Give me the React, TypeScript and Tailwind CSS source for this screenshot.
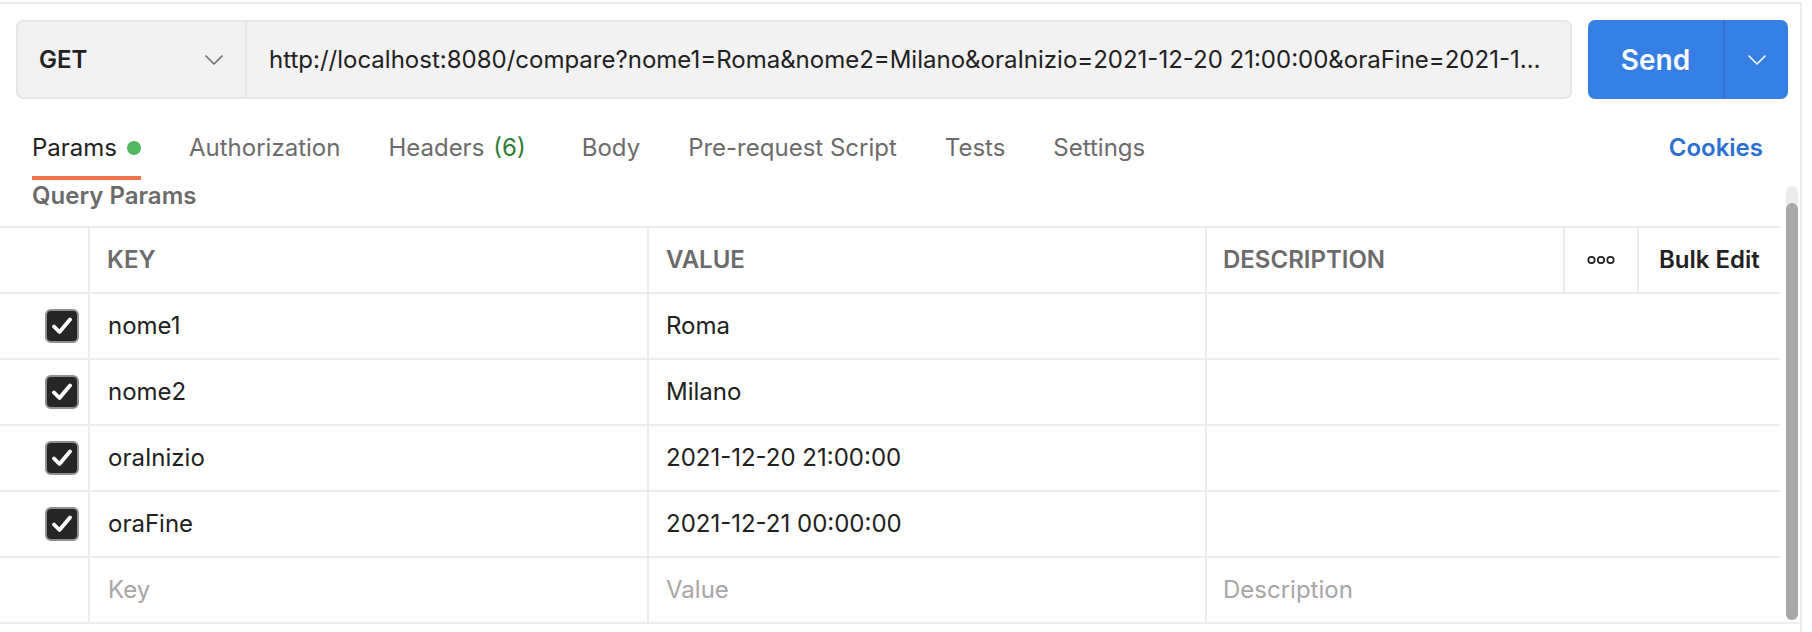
import React from 'react';

const tabs = [
  { label: 'Authorization' },
  { label: 'Headers', count: '(6)' },
  { label: 'Body' },
  { label: 'Pre-request Script' },
  { label: 'Tests' },
  { label: 'Settings' },
];

const params = [
  { key: 'nome1', value: 'Roma' },
  { key: 'nome2', value: 'Milano' },
  { key: 'oraInizio', value: '2021-12-20 21:00:00' },
  { key: 'oraFine', value: '2021-12-21 00:00:00' },
];

const Chevron = ({ className }: { className?: string }) => (
  <svg width="18" height="10" viewBox="0 0 18 10" fill="none" className={className}>
    <path d="M1 1l8 8 8-8" stroke="currentColor" strokeWidth="1.6" strokeLinecap="round" strokeLinejoin="round" />
  </svg>
);

const Checkbox = () => (
  <div className="w-[34px] h-[34px] rounded-[6px] bg-[#262626] border-2 border-[#8f8f8f] flex items-center justify-center">
    <svg width="22" height="18" viewBox="0 0 22 18" fill="none">
      <path d="M3 9.5l5.5 5.5L19 2.5" stroke="white" strokeWidth="3.8" strokeLinecap="round" strokeLinejoin="round" />
    </svg>
  </div>
);

const MoreDots = () => (
  <svg width="28" height="10" viewBox="0 0 28 10" fill="none">
    <circle cx="4.5" cy="5" r="3.2" stroke="#212121" strokeWidth="1.7" />
    <circle cx="14" cy="5" r="3.2" stroke="#212121" strokeWidth="1.7" />
    <circle cx="23.5" cy="5" r="3.2" stroke="#212121" strokeWidth="1.7" />
  </svg>
);

export default function App() {
  return (
    <div className="w-[1812px] h-[632px] bg-white overflow-hidden font-['Inter',sans-serif] text-[#212121]">
      <div className="mt-[2px] w-[1802px] h-[630px] border-t-2 border-r-2 border-[#ededed]">
        {/* request bar */}
        <div className="flex pt-[16px] pl-[16px] gap-[16px]">
          <div className="flex h-[79px] w-[1556px] rounded-[7px] border-2 border-[#e6e6e6] bg-[#f2f2f2]">
            <div className="w-[229px] flex items-center justify-between pl-[21px] pr-[22px] border-r-2 border-[#e6e6e6]">
              <span className="text-[24px] font-semibold">GET</span>
              <Chevron className="text-[#6b6b6b]" />
            </div>
            <div className="flex-1 min-w-0 flex items-center pl-[22px] pr-[22px]">
              <span className="truncate text-[24px]">
                http://localhost:8080/compare?nome1=Roma&amp;nome2=Milano&amp;oraInizio=2021-12-20 21:00:00&amp;oraFine=2021-12-21 00:00:00
              </span>
            </div>
          </div>
          <div className="flex h-[79px] w-[200px] rounded-[7px] bg-[#357ee3] text-white">
            <div className="w-[135px] flex items-center justify-center text-[28px] font-semibold">Send</div>
            <div className="flex-1 flex items-center justify-center border-l-2 border-[#2f72d4]">
              <Chevron />
            </div>
          </div>
        </div>

        {/* tabs */}
        <div className="flex items-end justify-between pl-[32px] pr-[37px] h-[81px]">
          <div className="flex gap-[48px]">
            <div className="flex flex-col">
              <div className="flex items-center gap-[10px] h-[30px] text-[24px] leading-[30px]">
                <span>Params</span>
                <span className="w-[14px] h-[14px] rounded-full bg-[#4fb85f]" />
              </div>
              <div className="mt-[13px] h-[4px] bg-[#ef7449]" />
            </div>
            {tabs.map((t) => (
              <div key={t.label} className={`flex flex-col ${t.count ? 'mr-[8px]' : ''}`}>
                <div className="flex items-center gap-[9px] h-[30px] text-[24px] leading-[30px] text-[#6b6b6b]">
                  <span>{t.label}</span>
                  {t.count && <span className="text-[#2f7d36]">{t.count}</span>}
                </div>
                <div className="mt-[13px] h-[4px]" />
              </div>
            ))}
          </div>
          <div className="mb-[17px] h-[30px] leading-[30px] text-[24px] font-semibold text-[#2b6fd3]">Cookies</div>
        </div>

        {/* params */}
        <div className="flex border-b-2 border-[#ededed]">
          <div className="w-[1780px]">
            <div className="pl-[32px] pt-[1px] pb-[15px] h-[46px] text-[24px] leading-[30px] font-semibold text-[#6b6b6b]">
              Query Params
            </div>
            <div className="grid grid-cols-[88px_559px_558px_358px_74px_143px] h-[66px] border-t-2 border-[#ededed] text-[24px] font-semibold">
              <div />
              <div className="flex items-center pl-[17px] border-l-2 border-[#ededed] text-[#6b6b6b]">KEY</div>
              <div className="flex items-center pl-[17px] border-l-2 border-[#ededed] text-[#6b6b6b]">VALUE</div>
              <div className="flex items-center pl-[16px] border-l-2 border-[#ededed] text-[#6b6b6b]">DESCRIPTION</div>
              <div className="flex items-center justify-center border-l-2 border-[#ededed]">
                <MoreDots />
              </div>
              <div className="flex items-center pl-[20px] border-l-2 border-[#ededed]">Bulk Edit</div>
            </div>
            {params.map((p) => (
              <div key={p.key} className="grid grid-cols-[88px_559px_558px_575px] h-[66px] border-t-2 border-[#ededed] text-[24px]">
                <div className="flex items-center justify-end pr-[9px]">
                  <Checkbox />
                </div>
                <div className="flex items-center pl-[18px] border-l-2 border-[#ededed]">{p.key}</div>
                <div className="flex items-center pl-[17px] border-l-2 border-[#ededed]">{p.value}</div>
                <div className="border-l-2 border-[#ededed]" />
              </div>
            ))}
            <div className="grid grid-cols-[88px_559px_558px_575px] h-[66px] border-t-2 border-[#ededed] text-[24px] text-[#a6a6a6]">
              <div />
              <div className="flex items-center pl-[18px] border-l-2 border-[#ededed]">Key</div>
              <div className="flex items-center pl-[17px] border-l-2 border-[#ededed]">Value</div>
              <div className="flex items-center pl-[16px] border-l-2 border-[#ededed]">Description</div>
            </div>
          </div>
          <div className="flex-1 pl-[6px] pt-[6px] pb-[2px]">
            <div className="w-[12px] h-full rounded-full bg-[#ececec] pt-[17px] flex">
              <div className="w-full flex-1 rounded-full bg-[#a8a8a8]" />
            </div>
          </div>
        </div>
      </div>
    </div>
  );
}
